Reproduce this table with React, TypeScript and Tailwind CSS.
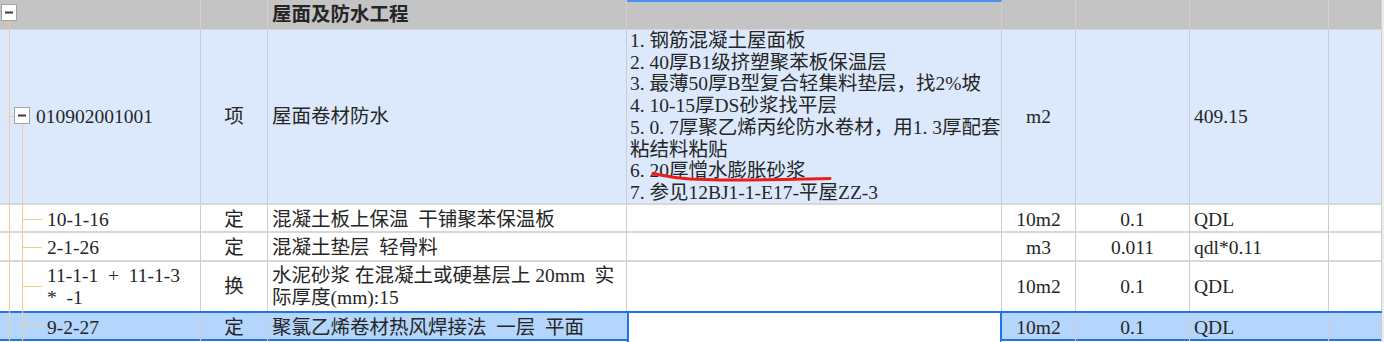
import React from "react";

const cols = "grid grid-cols-[201px_67px_359px_375px_74px_114px_139px_53px]";
const cell = "flex items-center border-r border-[#cdcdcd] overflow-visible whitespace-pre";

const features = [
  "1. 钢筋混凝土屋面板",
  "2. 40厚B1级挤塑聚苯板保温层",
  "3. 最薄50厚B型复合轻集料垫层，找2%坡",
  "4. 10-15厚DS砂浆找平层",
  "5. 0. 7厚聚乙烯丙纶防水卷材，用1. 3厚配套",
  "粘结料粘贴",
  "6. 20厚憎水膨胀砂浆",
  "7. 参见12BJ1-1-E17-平屋ZZ-3",
];

interface Sub {
  code: string[];
  type: string;
  name: string[];
  unit: string;
  qty: string;
  expr: string;
  h: string;
}

const subs: Sub[] = [
  { code: ["10-1-16"], type: "定", name: ["混凝土板上保温  干铺聚苯保温板"], unit: "10m2", qty: "0.1", expr: "QDL", h: "h-[28px] border-b-2 border-[#d8d8d8]" },
  { code: ["2-1-26"], type: "定", name: ["混凝土垫层  轻骨料"], unit: "m3", qty: "0.011", expr: "qdl*0.11", h: "h-[29px] border-b-2 border-[#d8d8d8]" },
  { code: ["11-1-1  +  11-1-3", "*  -1"], type: "换", name: ["水泥砂浆 在混凝土或硬基层上 20mm  实", "际厚度(mm):15"], unit: "10m2", qty: "0.1", expr: "QDL", h: "h-[49px]" },
];

function MinusBox({ x, y }: { x: number; y: number }) {
  return (
    <g>
      <rect x={x + 0.5} y={y + 0.5} width={15} height={16} fill="#fff" stroke="#a3a3a3" />
      <line x1={x + 4} y1={y + 8.5} x2={x + 12} y2={y + 8.5} stroke="#3a3a3a" strokeWidth={2} />
    </g>
  );
}

function TreeLines() {
  const orange = "#f7cb93";
  return (
    <svg className="absolute left-0 top-0 pointer-events-none" width={50} height={342}>
      <line x1={9.5} y1={21} x2={9.5} y2={342} stroke={orange} />
      <line x1={9} y1={116.5} x2={14} y2={116.5} stroke={orange} />
      <line x1={22.5} y1={124} x2={22.5} y2={342} stroke={orange} />
      {[219.5, 247.5, 286.5, 325.5].map((y) => (
        <line key={y} x1={22} y1={y} x2={42} y2={y} stroke={orange} />
      ))}
      <MinusBox x={1} y={4} />
      <MinusBox x={14} y={107} />
    </svg>
  );
}

export default function App() {
  return (
    <div className="relative w-[1384px] h-[342px] overflow-hidden bg-[#ececec] text-[19.5px] text-[#262626] font-['Liberation_Serif','Noto_Sans_CJK_SC',serif]">
      <div className="w-[1382px] bg-white">
        {/* group header */}
        <div className={`${cols} h-[30px] bg-[#c4c4c4] border-b border-[#d6d6d6]`}>
          <div className={`${cell} border-[#d0d0d0]`} />
          <div className={`${cell} border-[#d0d0d0]`} />
          <div className={`${cell} border-[#d0d0d0] pl-[4px] font-bold`}>屋面及防水工程</div>
          <div className={`${cell} border-[#d0d0d0] border-t-2 border-t-[#4b93ee]`} />
          <div className={`${cell} border-[#d0d0d0]`} />
          <div className={`${cell} border-[#d0d0d0]`} />
          <div className={`${cell} border-[#d0d0d0]`} />
          <div className={`${cell} border-[#d0d0d0]`} />
        </div>

        {/* bill item */}
        <div className={`${cols} h-[175px] bg-[#dce9fc] border-b-2 border-[#d8d8d8]`}>
          <div className={`${cell} pl-[36px]`}>010902001001</div>
          <div className={`${cell} justify-center`}>项</div>
          <div className={`${cell} pl-[4px]`}>屋面卷材防水</div>
          <div className={`${cell} pl-[3px] leading-[21.7px]`}>
            <div>
              {features.map((f) => (
                <div key={f}>{f}</div>
              ))}
            </div>
          </div>
          <div className={`${cell} justify-center`}>m2</div>
          <div className={cell} />
          <div className={`${cell} pl-[4px]`}>409.15</div>
          <div className={cell} />
        </div>

        {subs.map((s) => (
          <div key={s.code[0]} className={`${cols} ${s.h} bg-white`}>
            <div className={`${cell} pl-[47px] leading-[21.3px]`}>
              <div>
                {s.code.map((c) => (
                  <div key={c}>{c}</div>
                ))}
              </div>
            </div>
            <div className={`${cell} justify-center`}>{s.type}</div>
            <div className={`${cell} pl-[4px] leading-[21.3px]`}>
              <div>
                {s.name.map((n) => (
                  <div key={n}>{n}</div>
                ))}
              </div>
            </div>
            <div className={cell} />
            <div className={`${cell} justify-center`}>{s.unit}</div>
            <div className={`${cell} justify-center`}>{s.qty}</div>
            <div className={`${cell} pl-[4px]`}>{s.expr}</div>
            <div className={cell} />
          </div>
        ))}

        {/* selected row */}
        <div className={`${cols} h-[30px] bg-[#b4d5fc] border-y-2 border-[#1f74e8]`}>
          <div className={`${cell} pl-[47px]`}>9-2-27</div>
          <div className={`${cell} justify-center`}>定</div>
          <div className={`${cell} pl-[4px] border-r-0`}>聚氯乙烯卷材热风焊接法  一层  平面</div>
          <div className="bg-white border-x-2 border-[#1f74e8]" />
          <div className={`${cell} justify-center`}>10m2</div>
          <div className={`${cell} justify-center`}>0.1</div>
          <div className={`${cell} pl-[4px]`}>QDL</div>
          <div className={cell} />
        </div>

        <div className={`${cols} h-[4px] bg-white`}>
          <div className={cell} />
          <div className={cell} />
          <div className={cell} />
          <div className={cell} />
          <div className={cell} />
          <div className={cell} />
          <div className={cell} />
          <div className={cell} />
        </div>
      </div>

      <TreeLines />

      {/* hand-drawn red mark */}
      <svg className="absolute left-0 top-0 pointer-events-none" width={1384} height={342}>
        <path
          d="M653 173.5 C 664 175.5, 672 178, 690 179 L 720 180 C 760 180, 800 179, 830 178.5"
          fill="none"
          stroke="#ec1c1c"
          strokeWidth={3}
          strokeLinecap="round"
        />
      </svg>
    </div>
  );
}
